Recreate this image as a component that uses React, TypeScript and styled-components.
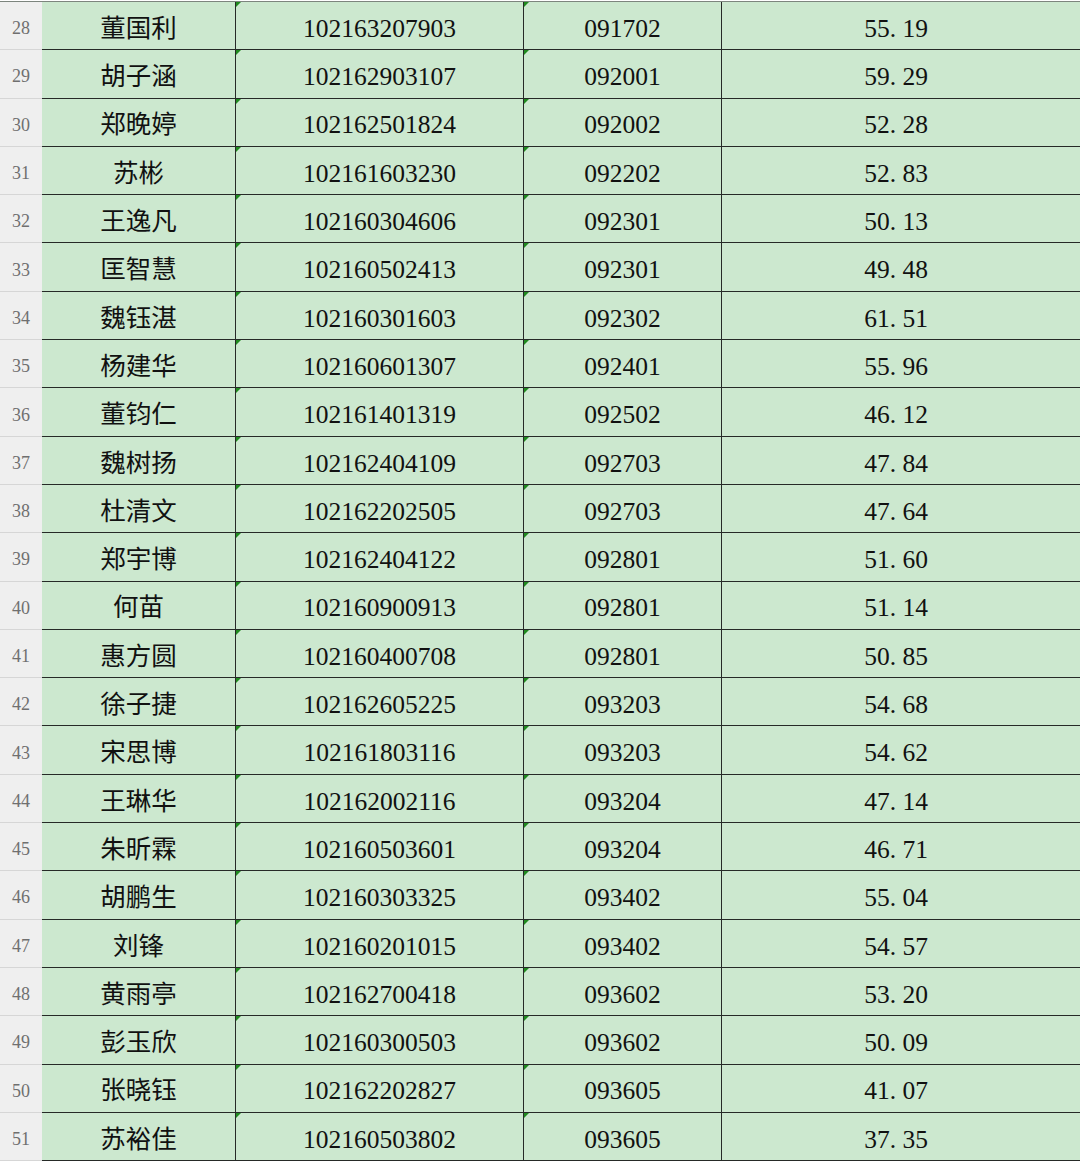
import styled, { createGlobalStyle } from "styled-components";

const GlobalStyle = createGlobalStyle`
  html, body {
    margin: 0;
    padding: 0;
    background: #ffffff;
  }
  * {
    box-sizing: border-box;
  }
`;

interface Entry {
  no: number;
  name: string;
  id: string;
  code: string;
  score: string;
}

const rows: Entry[] = [
  { no: 28, name: "董国利", id: "102163207903", code: "091702", score: "55.19" },
  { no: 29, name: "胡子涵", id: "102162903107", code: "092001", score: "59.29" },
  { no: 30, name: "郑晚婷", id: "102162501824", code: "092002", score: "52.28" },
  { no: 31, name: "苏彬", id: "102161603230", code: "092202", score: "52.83" },
  { no: 32, name: "王逸凡", id: "102160304606", code: "092301", score: "50.13" },
  { no: 33, name: "匡智慧", id: "102160502413", code: "092301", score: "49.48" },
  { no: 34, name: "魏钰湛", id: "102160301603", code: "092302", score: "61.51" },
  { no: 35, name: "杨建华", id: "102160601307", code: "092401", score: "55.96" },
  { no: 36, name: "董钧仁", id: "102161401319", code: "092502", score: "46.12" },
  { no: 37, name: "魏树扬", id: "102162404109", code: "092703", score: "47.84" },
  { no: 38, name: "杜清文", id: "102162202505", code: "092703", score: "47.64" },
  { no: 39, name: "郑宇博", id: "102162404122", code: "092801", score: "51.60" },
  { no: 40, name: "何苗", id: "102160900913", code: "092801", score: "51.14" },
  { no: 41, name: "惠方圆", id: "102160400708", code: "092801", score: "50.85" },
  { no: 42, name: "徐子捷", id: "102162605225", code: "093203", score: "54.68" },
  { no: 43, name: "宋思博", id: "102161803116", code: "093203", score: "54.62" },
  { no: 44, name: "王琳华", id: "102162002116", code: "093204", score: "47.14" },
  { no: 45, name: "朱昕霖", id: "102160503601", code: "093204", score: "46.71" },
  { no: 46, name: "胡鹏生", id: "102160303325", code: "093402", score: "55.04" },
  { no: 47, name: "刘锋", id: "102160201015", code: "093402", score: "54.57" },
  { no: 48, name: "黄雨亭", id: "102162700418", code: "093602", score: "53.20" },
  { no: 49, name: "彭玉欣", id: "102160300503", code: "093602", score: "50.09" },
  { no: 50, name: "张晓钰", id: "102162202827", code: "093605", score: "41.07" },
  { no: 51, name: "苏裕佳", id: "102160503802", code: "093605", score: "37.35" },
];

const Sheet = styled.div`
  margin-top: 1px;
  border-top: 1px solid #7d857e;
  width: 1080px;
`;

const Row = styled.div`
  display: grid;
  grid-template-columns: 42px 194px 288px 198px 1fr;
  height: 48.3px;
`;

const RowHead = styled.div`
  display: flex;
  align-items: center;
  justify-content: center;
  padding-top: 6px;
  background: #efefef;
  border-bottom: 1px solid #d6d6d6;
  color: #6f6f6f;
  font-family: "Liberation Serif", serif;
  font-size: 18px;
`;

interface CellProps {
  $flag?: boolean;
  $last?: boolean;
}

const Cell = styled.div<CellProps>`
  position: relative;
  display: flex;
  align-items: center;
  justify-content: center;
  padding-top: 6px;
  padding-right: ${(p) => (p.$last ? "10px" : "0")};
  background: #cce8cf;
  border-bottom: 1px solid #262a27;
  border-right: ${(p) => (p.$last ? "none" : "1px solid #262a27")};
  color: #111;
  font-family: "Liberation Serif", "Noto Sans CJK SC", serif;
  font-size: 25.5px;
  line-height: 1;

  &::before {
    content: "";
    display: ${(p) => (p.$flag ? "block" : "none")};
    position: absolute;
    top: 0;
    left: 0;
    width: 0;
    height: 0;
    border-top: 5px solid #1f8a1f;
    border-right: 5px solid transparent;
  }
`;

const Dot = styled.span`
  display: inline-block;
  width: 0.5em;
  text-align: left;
`;

function Score({ value }: { value: string }) {
  const [whole, frac] = value.split(".");
  return (
    <span>
      {whole}
      <Dot>.</Dot>
      {frac}
    </span>
  );
}

function App() {
  return (
    <>
      <GlobalStyle />
      <Sheet>
        {rows.map((r) => (
          <Row key={r.no}>
            <RowHead>{r.no}</RowHead>
            <Cell>{r.name}</Cell>
            <Cell $flag>{r.id}</Cell>
            <Cell $flag>{r.code}</Cell>
            <Cell $last>
              <Score value={r.score} />
            </Cell>
          </Row>
        ))}
      </Sheet>
    </>
  );
}

export default App;
